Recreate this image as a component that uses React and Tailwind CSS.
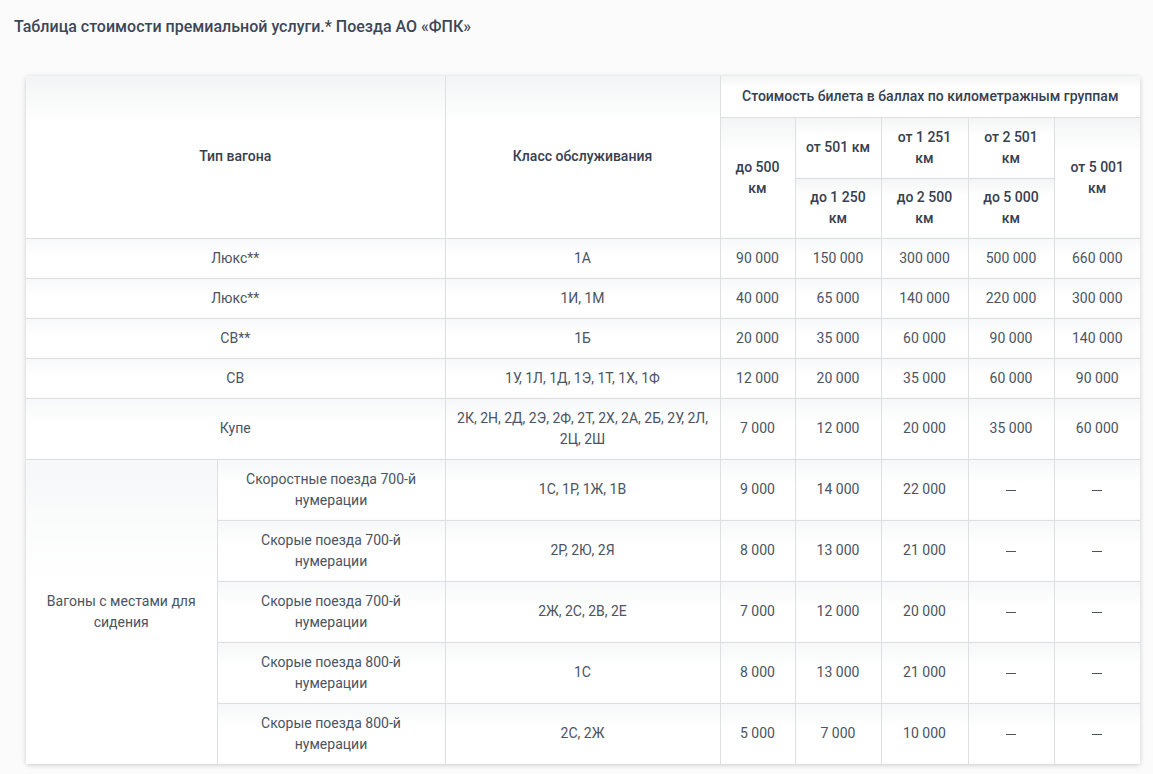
import React from "react";

const cell = "border border-[#dedfe1] text-center align-middle px-2 bg-gradient-to-b from-[#f6f7f8] to-white to-40%";
const head = "border border-[#dedfe1] text-center align-middle px-2 font-medium text-[14px] text-[#36404f] bg-gradient-to-b from-[#f3f4f5] to-white to-30%";

const rows1 = [
  ["Люкс**", "1А", "90 000", "150 000", "300 000", "500 000", "660 000", 40],
  ["Люкс**", "1И, 1М", "40 000", "65 000", "140 000", "220 000", "300 000", 40],
  ["СВ**", "1Б", "20 000", "35 000", "60 000", "90 000", "140 000", 40],
  ["СВ", "1У, 1Л, 1Д, 1Э, 1Т, 1Х, 1Ф", "12 000", "20 000", "35 000", "60 000", "90 000", 40],
  ["Купе", "2К, 2Н, 2Д, 2Э, 2Ф, 2Т, 2Х, 2А, 2Б, 2У, 2Л, 2Ц, 2Ш", "7 000", "12 000", "20 000", "35 000", "60 000", 61],
];

const rows2 = [
  ["Скоростные поезда 700-й нумерации", "1С, 1Р, 1Ж, 1В", "9 000", "14 000", "22 000", "—", "—"],
  ["Скорые поезда 700-й нумерации", "2Р, 2Ю, 2Я", "8 000", "13 000", "21 000", "—", "—"],
  ["Скорые поезда 700-й нумерации", "2Ж, 2С, 2В, 2Е", "7 000", "12 000", "20 000", "—", "—"],
  ["Скорые поезда 800-й нумерации", "1С", "8 000", "13 000", "21 000", "—", "—"],
  ["Скорые поезда 800-й нумерации", "2С, 2Ж", "5 000", "7 000", "10 000", "—", "—"],
];

function Dash() {
  return <span className="inline-block w-[10px] h-px bg-[#4a5463] align-middle"></span>;
}

export default function App() {
  return (
    <div
      className="min-h-[774px] w-[1153px] bg-[#fbfbfc] text-[#4a5463]"
      style={{ fontFamily: "Roboto, 'Liberation Sans', sans-serif" }}
    >
      <div className="pt-[17px] pl-[14px] h-[76px]">
        <h1 className="text-[16px] leading-[20px] font-medium text-[#3d4756]">
          Таблица стоимости премиальной услуги.* Поезда АО «ФПК»
        </h1>
      </div>
      <div className="ml-[26px] w-[1114px] rounded-[3px] shadow-[0_1px_5px_rgba(0,0,0,0.2)] bg-white">
        <table className="table-fixed border-collapse w-[1114px] text-[14px] leading-[21px] border-hidden">
          <colgroup>
            <col className="w-[191px]" />
            <col className="w-[228px]" />
            <col className="w-[275px]" />
            <col className="w-[75px]" />
            <col className="w-[86px]" />
            <col className="w-[87px]" />
            <col className="w-[86px]" />
            <col className="w-[86px]" />
          </colgroup>
          <thead>
            <tr className="h-[41px]">
              <th colSpan={2} rowSpan={3} className={head}>Тип вагона</th>
              <th rowSpan={3} className={head}>Класс обслуживания</th>
              <th colSpan={5} className={head}>Стоимость билета в баллах по километражным группам</th>
            </tr>
            <tr className="h-[61px]">
              <th rowSpan={2} className={head}>до 500 км</th>
              <th className={head}>от 501 км</th>
              <th className={head}>от 1 251 км</th>
              <th className={head}>от 2 501 км</th>
              <th rowSpan={2} className={head}>от 5 001 км</th>
            </tr>
            <tr className="h-[60px]">
              <th className={head}>до 1 250 км</th>
              <th className={head}>до 2 500 км</th>
              <th className={head}>до 5 000 км</th>
            </tr>
          </thead>
          <tbody>
            {rows1.map((r, i) => (
              <tr key={i} className={r[7] === 40 ? "h-[40px]" : "h-[61px]"}>
                <td colSpan={2} className={cell}>{r[0]}</td>
                <td className={cell}>{r[1]}</td>
                {r.slice(2, 7).map((v, j) => (
                  <td key={j} className={cell}>{v}</td>
                ))}
              </tr>
            ))}
            {rows2.map((r, i) => (
              <tr key={"b" + i} className="h-[61px]">
                {i === 0 && (
                  <td rowSpan={5} className={cell + " px-4"}>Вагоны с местами для сидения</td>
                )}
                <td className={cell + " px-6"}>{r[0]}</td>
                <td className={cell}>{r[1]}</td>
                {r.slice(2, 7).map((v, j) => (
                  <td key={j} className={cell}>{v === "—" ? <Dash /> : v}</td>
                ))}
              </tr>
            ))}
          </tbody>
        </table>
      </div>
    </div>
  );
}
